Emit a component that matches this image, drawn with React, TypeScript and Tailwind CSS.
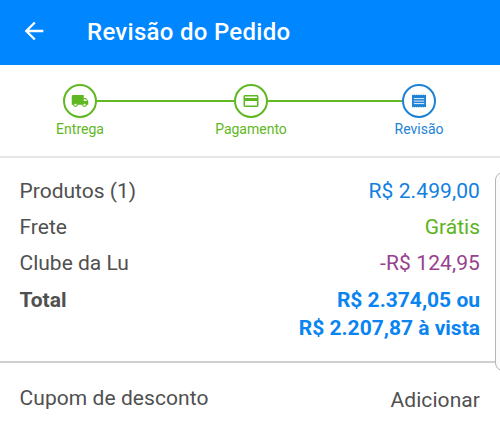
import type { ReactNode } from 'react';
import { MdArrowBack, MdLocalShipping, MdPayment } from 'react-icons/md';

interface StepProps {
    label: string;
    color: string;
    children: ReactNode;
}

function Step({ label, color, children }: StepProps) {
    return (
        <div className={`flex w-[34px] shrink-0 flex-col items-center ${color}`}>
            <div className="flex size-[34px] items-center justify-center rounded-full border-2 border-current">
                {children}
            </div>
            <span className="mt-[1px] whitespace-nowrap text-[14px] leading-5">{label}</span>
        </div>
    );
}

// Receipt with serrated top and bottom edges
function ReceiptIcon() {
    return (
        <svg width="14" height="14" viewBox="0 0 14 14" fill="none">
            <path
                d="M0 0.4l1.2 .8 1.15-.8 1.2.8 1.15-.8 1.15.8L7 .4l1.15.8 1.2-.8 1.15.8 1.15-.8 1.2.8L14 .4v13.2l-1.15-.8-1.2.8-1.15-.8-1.15.8-1.2-.8L7 13.6l-1.15-.8-1.15.8-1.15-.8-1.2.8-1.15-.8-1.2.8z"
                fill="currentColor"
            />
            <path d="M1.8 4.6h10.4M1.8 7.1h10.4M1.8 9.6h10.4" stroke="white" strokeWidth="0.9" />
        </svg>
    );
}

interface RowProps {
    label: string;
    value: string;
    color: string;
}

function Row({ label, value, color }: RowProps) {
    return (
        <div className="flex h-9 justify-between">
            <span>{label}</span>
            <span className={color}>{value}</span>
        </div>
    );
}

export default function App() {
    return (
        <div className="relative h-[432px] w-[500px] overflow-hidden bg-white font-['Roboto',sans-serif] text-[#505050]">
            <header className="flex h-[65px] items-center bg-[#0086ff] pb-[2px] pl-[20px] text-white">
                <MdArrowBack className="mb-[1px]" size={28} />
                <h1 className="ml-[39px] text-[24px] font-medium leading-7 tracking-[0.28px]">Revisão do Pedido</h1>
            </header>

            <nav className="flex h-[91px] pl-[63px] pr-[64px] pt-[19px]">
                <Step label="Entrega" color="text-[#5fb822]">
                    <MdLocalShipping size={18} />
                </Step>
                <div className="mt-[16px] h-[2px] w-[137px] bg-[#62bb22]" />
                <Step label="Pagamento" color="text-[#5fb822]">
                    <MdPayment size={18} />
                </Step>
                <div className="mt-[16px] h-[2px] flex-1 bg-[#62bb22]" />
                <Step label="Revisão" color="text-[#1d82d6]">
                    <ReceiptIcon />
                </Step>
            </nav>

            <section className="h-[207px] border-b-2 border-t-2 border-b-[#cfcfcf] border-t-[#e6e6e6] pl-[19.5px] pr-[20px] pt-[19px] text-[21px] leading-7">
                <Row label="Produtos (1)" value="R$ 2.499,00" color="text-[#1180e0] tracking-[0.1px]" />
                <Row label="Frete" value="Grátis" color="text-[#5bb41c]" />
                <Row label="Clube da Lu" value="-R$ 124,95" color="text-[#97418f] tracking-[0.1px]" />
                <div className="mt-[1px] flex justify-between font-bold">
                    <span>Total</span>
                    <span className="text-right text-[#0a84f0]">
                        R$ 2.374,05 ou
                        <br />
                        R$ 2.207,87 à vista
                    </span>
                </div>
            </section>

            <section className="flex justify-between pl-[19.5px] pr-[20px] pt-[21px] text-[21px] leading-7">
                <span className="tracking-[0.07px]">Cupom de desconto</span>
                <button className="mt-[2px] tracking-[0.07px]">Adicionar</button>
            </section>

            {/* Floating edge panel handle, mostly off screen */}
            <div className="absolute left-[495px] top-[172px] h-[199px] w-[20px] rounded-[8px] border border-[#b5b5b5] bg-[#fbfbfb]" />
        </div>
    );
}
